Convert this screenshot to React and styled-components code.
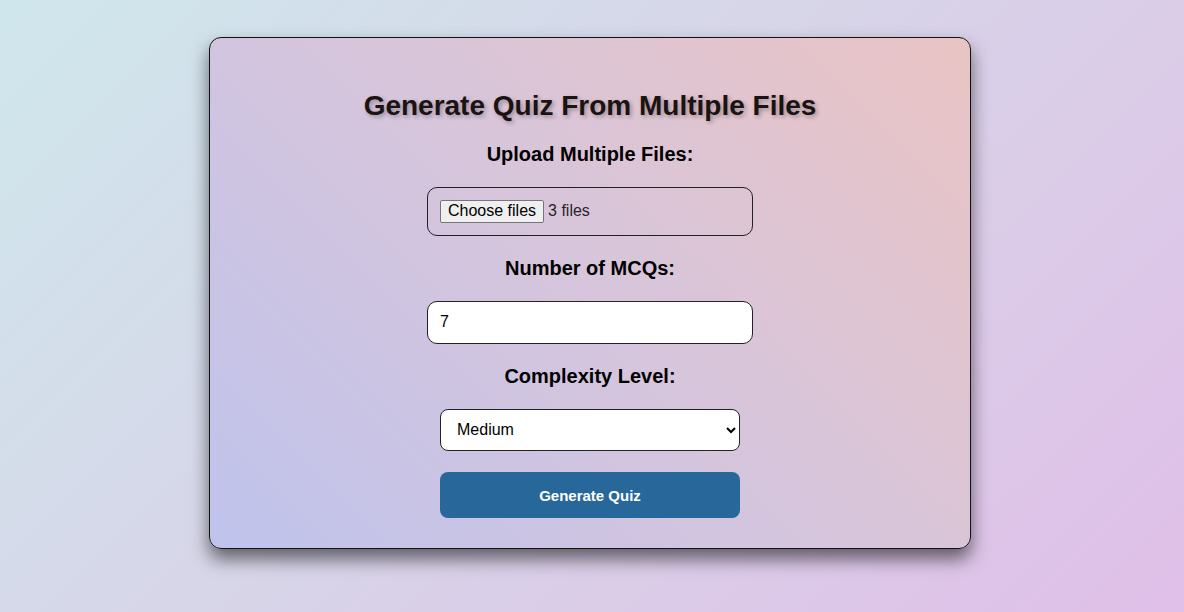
import React from "react";
import styled, { createGlobalStyle } from "styled-components";

const GlobalStyle = createGlobalStyle`
  html, body {
    margin: 0;
    padding: 0;
  }
  body {
    font-family: "Liberation Sans", Arial, sans-serif;
    min-height: 612px;
    background: linear-gradient(135deg, #cfe7ec 0%, #d8d3e8 50%, #e0bfe8 100%);
  }
`;

const Page = styled.div`
  display: flex;
  justify-content: center;
  padding: 37px 4px 0 0;
  height: 612px;
  box-sizing: border-box;
`;

const Card = styled.div`
  width: 762px;
  height: 512px;
  box-sizing: border-box;
  border: 1px solid #111;
  border-radius: 12px;
  background: linear-gradient(45deg, #bfc3ec 0%, #d6c5dc 50%, #eac4c4 100%);
  box-shadow: 0 10px 18px rgba(0, 0, 0, 0.55);
  padding: 52px 40px 30px;
  display: flex;
  flex-direction: column;
  align-items: center;
`;

const Title = styled.h1`
  margin: 0 0 20px;
  font-size: 28px;
  line-height: 32px;
  font-weight: bold;
  color: #1b1212;
  text-shadow: 2px 2px 4px rgba(0, 0, 0, 0.3);
`;

const Label = styled.label`
  display: block;
  margin: ${(p) => (p.$first ? "0" : "20px")} 0 21px;
  font-size: 20px;
  line-height: 24px;
  font-weight: bold;
  color: #000;
`;

const FileBox = styled.div`
  width: 326px;
  height: 49px;
  box-sizing: border-box;
  border: 1px solid #222;
  border-radius: 10px;
  padding: 0 12px;
  display: flex;
  align-items: center;
  gap: 4px;
  font-size: 16px;
  color: #2a1f2a;

  input {
    display: none;
  }
`;

const PickButton = styled.label`
  display: inline-flex;
  align-items: center;
  height: 23px;
  box-sizing: border-box;
  padding: 0 7px;
  background: #efefef;
  border: 1px solid #767676;
  border-radius: 2px;
  color: #000;
  font-size: 16px;
  cursor: default;
`;

const NumberInput = styled.input`
  width: 326px;
  height: 43px;
  box-sizing: border-box;
  border: 1px solid #222;
  border-radius: 10px;
  padding: 0 12px;
  background: #fff;
  font-family: "Liberation Sans", Arial, sans-serif;
  font-size: 16px;
  color: #000;
  outline: none;
`;

const Select = styled.select`
  width: 300px;
  height: 43px;
  box-sizing: border-box;
  border: 1px solid #222;
  border-radius: 8px;
  padding: 0 12px;
  background: #fff;
  font-family: "Liberation Sans", Arial, sans-serif;
  font-size: 16px;
  color: #000;
`;

const SubmitButton = styled.button`
  margin-top: 21px;
  width: 300px;
  height: 46px;
  border: none;
  border-radius: 8px;
  background-color: #27679a;
  color: #fff;
  font-family: "Liberation Sans", Arial, sans-serif;
  font-size: 15px;
  font-weight: bold;
  cursor: pointer;
`;

const App = () => {
  return (
    <>
      <GlobalStyle />
      <Page>
        <Card>
          <Title>Generate Quiz From Multiple Files</Title>
          <Label $first>Upload Multiple Files:</Label>
          <FileBox>
            <PickButton htmlFor="files">Choose files</PickButton>
            <span>3 files</span>
            <input id="files" type="file" multiple />
          </FileBox>
          <Label>Number of MCQs:</Label>
          <NumberInput type="number" defaultValue={7} />
          <Label>Complexity Level:</Label>
          <Select defaultValue="medium">
            <option value="easy">Easy</option>
            <option value="medium">Medium</option>
            <option value="hard">Hard</option>
          </Select>
          <SubmitButton>Generate Quiz</SubmitButton>
        </Card>
      </Page>
    </>
  );
};

export default App;
